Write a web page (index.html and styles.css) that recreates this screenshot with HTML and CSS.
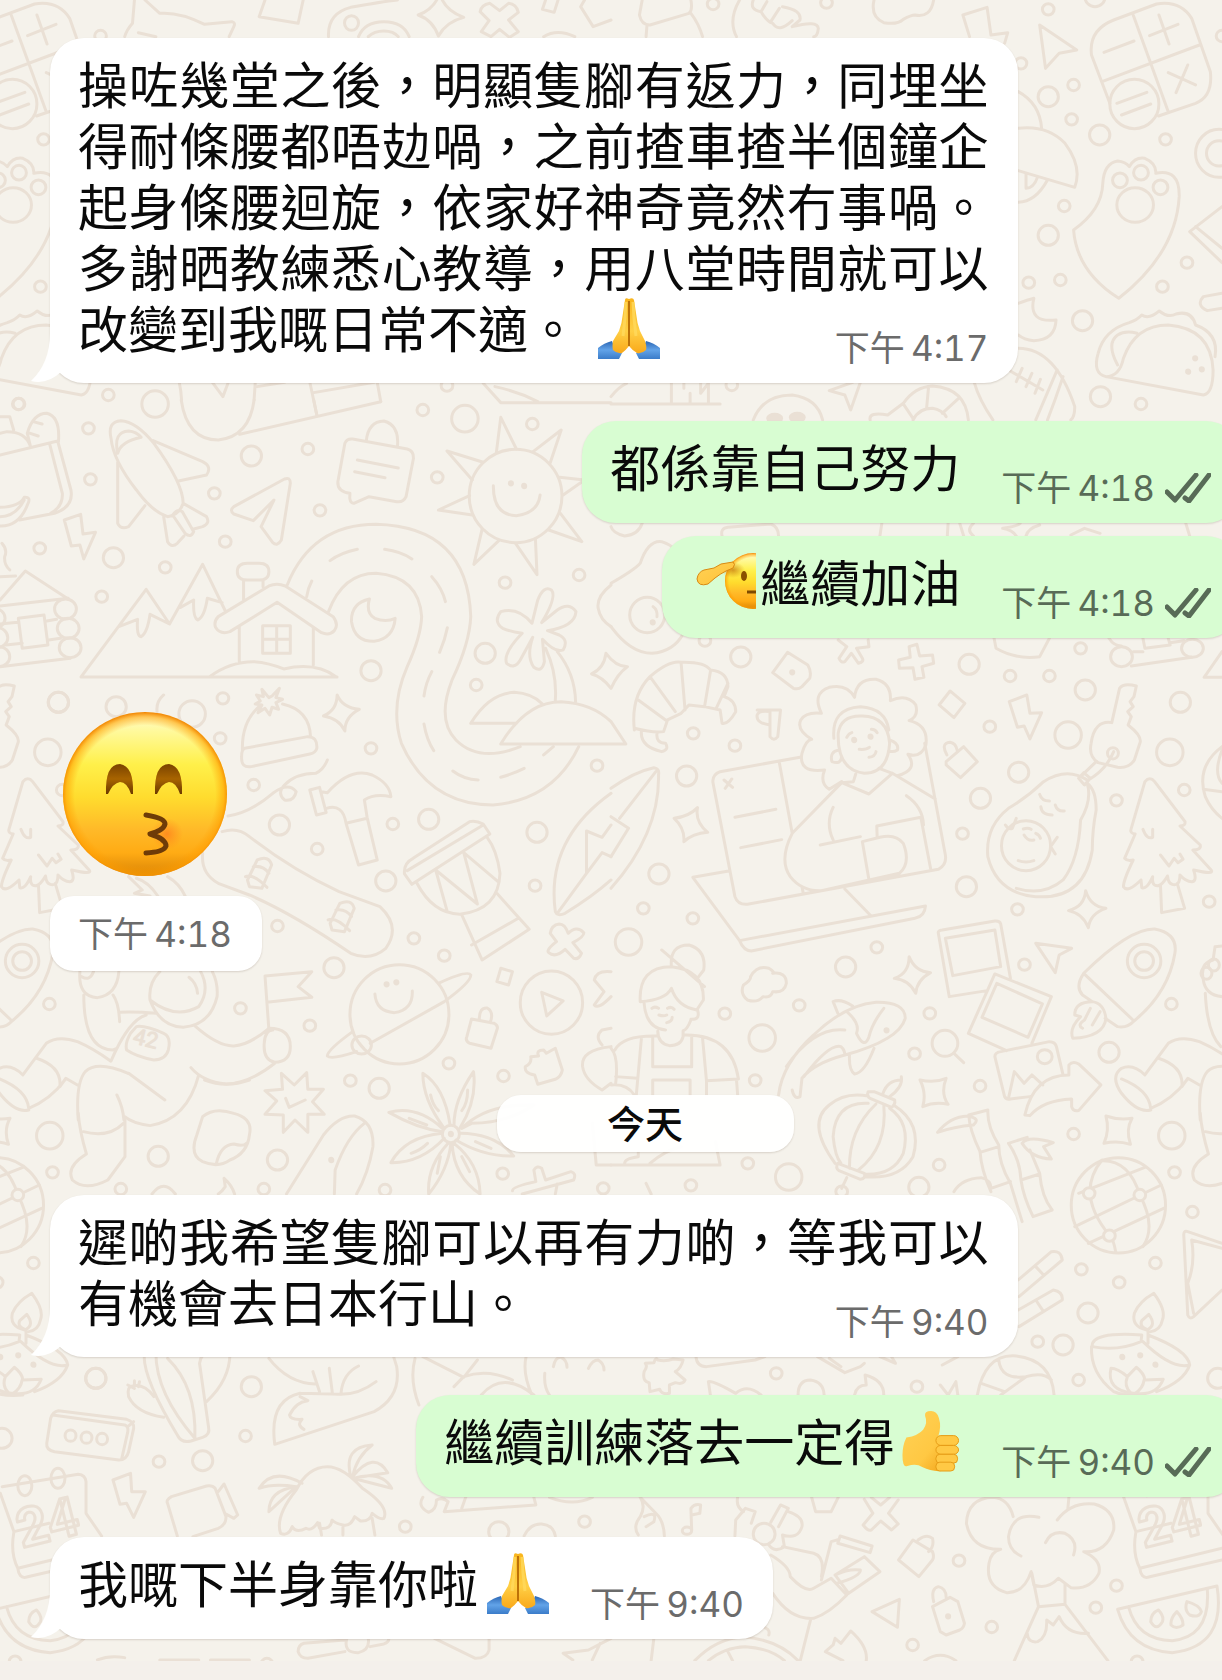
FILE: index.html
```html
<!DOCTYPE html>
<html lang="zh-HK">
<head>
<meta charset="utf-8">
<meta name="viewport" content="width=device-width, initial-scale=1">
<title>對話</title>
<link rel="stylesheet" href="styles.css">
</head>
<body>
<svg class="sprite" aria-hidden="true">
  <defs>
    <linearGradient id="skin" x1="0" y1="0" x2="0" y2="1"><stop offset="0" stop-color="#f9b51c"/><stop offset=".6" stop-color="#ffcf45"/><stop offset="1" stop-color="#f9a91a"/></linearGradient>
    <linearGradient id="sleeve" x1="0" y1="0" x2="0" y2="1"><stop offset="0" stop-color="#2b66b4"/><stop offset=".5" stop-color="#62a3e8"/><stop offset="1" stop-color="#3b7cc9"/></linearGradient>
    <linearGradient id="thumb" x1="0" y1="0" x2="1" y2="1"><stop offset="0" stop-color="#ffd257"/><stop offset=".6" stop-color="#ffc843"/><stop offset="1" stop-color="#ef9d12"/></linearGradient>
    <linearGradient id="face" x1="0" y1="0" x2="0" y2="1"><stop offset="0" stop-color="#fffbd0"/><stop offset=".12" stop-color="#fff99a"/><stop offset=".32" stop-color="#fff04a"/><stop offset=".52" stop-color="#ffdc2e"/><stop offset=".72" stop-color="#ffb928"/><stop offset=".86" stop-color="#ffab14"/><stop offset="1" stop-color="#d98305"/></linearGradient>
    <radialGradient id="rim" cx=".5" cy=".51" r=".51"><stop offset=".84" stop-color="#ff9d00" stop-opacity="0"/><stop offset=".94" stop-color="#ff9d00" stop-opacity=".55"/><stop offset="1" stop-color="#f08200"/></radialGradient>
    <radialGradient id="shade"><stop offset="0" stop-color="#b85a00" stop-opacity=".6"/><stop offset="1" stop-color="#c87000" stop-opacity="0"/></radialGradient>
    <radialGradient id="blush"><stop offset="0" stop-color="#ff7a1c" stop-opacity=".7"/><stop offset="1" stop-color="#ff8a1c" stop-opacity="0"/></radialGradient>
    <linearGradient id="eye" x1="0" y1="0" x2="0" y2="1"><stop offset="0" stop-color="#7a4300"/><stop offset=".5" stop-color="#a86400"/><stop offset="1" stop-color="#6b3900"/></linearGradient>
    <symbol id="pray" viewBox="0 0 62 61">
      <path d="M0 50Q6 45 14 43L17 51L24 55L21 61H0Z" fill="url(#sleeve)"/>
      <path d="M62 50Q56 45 48 43L45 51L38 55L41 61H62Z" fill="url(#sleeve)"/>
      <path d="M31 1Q27-1 27 2L25 15Q24 25 21 33L15 43Q14 49 15 52Q19 56 24 55Q28 52 31 48Z" fill="url(#skin)"/>
      <path d="M31 1Q35-1 36 2L38 15Q39 25 42 33L47 43Q49 49 48 52Q44 56 39 55Q34 52 31 48Z" fill="url(#skin)"/>
      <path d="M31 3V48" stroke="#bd7208" stroke-width="2" fill="none"/>
      <path d="M28 4L27 20L25 38M35 4L36 20L38 38" stroke="#ffd95c" stroke-width="3" fill="none" opacity=".8"/>
    </symbol>
    <symbol id="salute" viewBox="0 0 66 61">
      <circle cx="63" cy="29" r="28" fill="url(#face)"/>
      <circle cx="63" cy="29" r="28" fill="url(#rim)"/>
      <ellipse cx="43" cy="18" rx="12" ry="8" fill="url(#shade)"/>
      <ellipse cx="54" cy="24" rx="3" ry="5" fill="#8a5200"/>
      <path d="M57 40H66" stroke="#7e4a00" stroke-width="3"/>
      <path d="M7 27Q8 20 14 18L24 16L31 12L43 10Q46 12 43 16L36 19Q30 22 25 26L18 32Q8 35 7 27Z" fill="url(#thumb)" stroke="#d98a12"/>
    </symbol>
    <symbol id="thumbs" viewBox="0 0 58 62">
      <path d="M29 0Q22 0 23 5Q26 12 21 19Q16 25 4 27Q0 35 0 45Q0 58 5 56Q14 53 20 57Q30 62 40 61Q46 58 48 48L51 26L36 27Q40 16 37 7Q35 0 29 0Z" fill="url(#thumb)"/>
      <g fill="#ffc945" stroke="#e59c16"><rect x="34" y="25" width="23" height="10" rx="5"/><rect x="34" y="35" width="23" height="9" rx="5"/><rect x="34" y="44" width="22" height="9" rx="4"/><rect x="34" y="52" width="19" height="9" rx="4"/></g>
    </symbol>
    <symbol id="ticks" viewBox="0 0 46 30">
      <path d="M2 19L10 27L31 2M20 25L24 28L44 2" fill="none" stroke="currentColor" stroke-width="5" stroke-linecap="round" stroke-linejoin="round"/>
    </symbol>
    <symbol id="tail" viewBox="0 0 50 50">
      <path d="M19 0Q19 30 0 48Q16 52 30 39Q38 47 50 48V0Z" fill="#fff"/>
    </symbol>
  </defs>
</svg>

<main class="chat">
  <svg class="doodles" aria-hidden="true">
    <defs>
      <ellipse id="s" rx="15" ry="17"/><ellipse id="m" rx="26" ry="30"/><ellipse id="l" rx="34" ry="40"/><ellipse id="d" rx="4" ry="5" class="dot"/>
    </defs>
    <!-- motifs that repeat at both sides of the wallpaper -->
    <g id="edge">
      <g transform="translate(611 0) scale(.3897 .3333)">
        <path d="M1280 310L1233 165Q1225 90 1290 60L1400 12Q1460 0 1490 55L1538 215Q1545 290 1500 310L1405 348M1340 45L1430 335M1260 245L1510 135M1265 157L1342 123M1382 107L1455 73M1406 45L1432 132M1430 218L1500 255M1480 195L1450 278M1298 310L1375 277M1310 345L1385 312"/>
        <ellipse cx="1343" cy="312" rx="63" ry="74"/>
        <path d="M1187 690Q1260 630 1262 550Q1265 490 1300 483Q1320 485 1330 500Q1345 470 1370 475Q1400 490 1398 520Q1460 505 1458 590Q1450 760 1303 895Q1195 815 1187 690Z"/>
        <ellipse cx="1306" cy="541" rx="19" ry="22"/><ellipse cx="1360" cy="518" rx="19" ry="22"/><ellipse cx="1410" cy="562" rx="19" ry="22"/><ellipse cx="1345" cy="615" rx="47" ry="52"/>
        <path d="M1270 1130Q1305 1130 1315 1075Q1345 975 1430 975Q1540 985 1545 1110Q1545 1180 1520 1185ZM1270 1130Q1235 1120 1250 1060Q1265 990 1330 968Q1350 960 1362 945Q1380 960 1407 933Q1430 955 1450 942Q1490 930 1500 975Q1560 1000 1550 1070M1300 1095Q1270 1030 1300 1005Q1320 990 1350 1000"/>
        <use href="#d" x="1499" y="1075"/><use href="#d" x="1516" y="1108"/><use href="#d" x="1481" y="1115"/>
        <use href="#s" x="1423" y="418"/><use href="#s" x="1415" y="860"/><use href="#s" x="1360" y="1212"/>
      </g>
      <g transform="translate(611 400) scale(.3897 .3333)">
        <path d="M1305 865Q1315 848 1348 858L1342 890L1332 905L1340 920L1326 935L1335 950L1327 975Q1365 1010 1357 1030L1343 1080Q1330 1105 1300 1102L1250 1088Q1225 1070 1232 1030Q1240 960 1285 968Z"/>
        <use href="#m" x="1461" y="907"/><use href="#l" x="1434" y="1057"/>
      </g>
      <g transform="translate(611 700) scale(.3897 .3333)">
        <path d="M1370 245Q1383 228 1395 245L1473 365Q1475 378 1460 378L1512 435Q1515 450 1493 450L1540 510Q1550 525 1495 510Q1505 545 1490 545Q1475 545 1460 525Q1460 560 1440 553Q1430 550 1428 528Q1410 565 1395 555Q1388 550 1390 530Q1375 570 1362 563L1360 540Q1325 580 1315 560Q1315 540 1340 480Q1325 485 1318 475L1345 402Q1330 400 1335 385ZM1410 555L1413 638L1472 625L1453 550M1365 388Q1375 420 1390 412V388M1410 465L1432 498L1445 475L1455 488L1468 478L1460 462"/>
        <path d="M1213 820Q1330 685 1395 687Q1455 700 1447 760Q1430 880 1342 963Q1325 985 1300 980L1268 955M1213 820Q1190 860 1210 885L1235 905M1213 820L1342 963M1235 905Q1190 905 1190 945L1205 950Q1175 985 1185 1015Q1265 1010 1270 955Q1265 910 1235 905M1230 925L1215 960Q1195 975 1210 985M1255 935L1235 975"/>
        <ellipse cx="1368" cy="783" rx="43" ry="50"/><ellipse cx="1368" cy="783" rx="24" ry="28"/>
        <use href="#s" x="1438" y="912"/><use href="#s" x="1471" y="270"/>
        <path d="M1370 1125L1430 1030Q1460 1005 1510 1025Q1550 1045 1595 1083M1405 1075Q1470 1100 1465 1160L1480 1135L1510 1155M1370 1125Q1340 1090 1310 1105Q1280 1130 1310 1180Q1350 1240 1385 1230M1310 1137Q1380 1170 1385 1225Q1440 1200 1478 1140M1640 1120Q1560 1080 1530 1115Q1505 1150 1512 1260"/>
      </g>
      <g transform="translate(611 1080) scale(.3897 .3333)">
        <ellipse cx="1302" cy="376" rx="121" ry="143"/>
        <path d="M1200 340L1370 262M1190 440L1412 315M1225 490L1418 385M1260 240Q1190 340 1280 467Q1290 480 1295 515M1260 242Q1330 240 1357 345Q1400 440 1365 500M1512 100Q1515 150 1533 222Q1480 260 1497 300Q1530 335 1588 300L1632 230V120M1525 155Q1590 175 1628 130"/>
        <g class="solid"><use href="#s" x="1227" y="340"/><use href="#s" x="1357" y="345"/><use href="#s" x="1279" y="467"/></g>
        <use href="#s" x="1446" y="277"/><use href="#s" x="1397" y="549"/><use href="#s" x="1304" y="607"/><use href="#l" x="1439" y="167"/>
        <path d="M1270 108Q1305 122 1337 115Q1320 150 1333 193Q1300 180 1265 190Q1280 150 1270 108Z"/>
        <path d="M1375 750Q1335 740 1343 700Q1355 665 1393 640Q1425 690 1415 720Q1410 750 1385 755M1375 748Q1355 740 1362 722L1380 703Q1400 735 1378 748V790M1362 765Q1230 755 1235 800Q1300 815 1360 785L1362 765M1378 765Q1480 810 1485 855Q1440 870 1365 785M1233 800Q1230 880 1290 935Q1320 950 1370 945M1485 855Q1470 905 1400 935M1283 865Q1300 865 1325 890L1348 862Q1368 880 1370 900L1417 898Q1400 950 1340 940Q1270 930 1283 865ZM1325 890Q1315 920 1335 940M1368 900Q1365 925 1345 940"/>
        <use href="#d" x="1312" y="831"/><use href="#d" x="1358" y="826"/><use href="#d" x="1397" y="854"/>
        <use href="#m" x="1557" y="895"/>
      </g>
      <g transform="translate(611 1360) scale(.3897 .3333)">
        <path d="M1300 748L1555 678Q1580 860 1440 878Q1330 870 1300 748ZM1328 740Q1350 840 1440 842Q1540 830 1530 685M1405 750Q1385 760 1385 785Q1400 815 1415 785Q1420 770 1405 750ZM1452 755Q1435 775 1437 795Q1450 810 1468 795Q1468 775 1452 755ZM1478 725Q1470 750 1485 765Q1510 775 1515 755Q1510 735 1478 725Z"/>
        <path d="M1317 380L1512 343Q1530 345 1532 365V460L1572 528M1312 400L1347 515Q1337 580 1357 625L1568 565M1357 625Q1360 655 1377 652L1568 600M1347 515L1437 490"/>
        <ellipse cx="1375" cy="377" rx="18" ry="30"/><ellipse cx="1460" cy="355" rx="18" ry="30"/>
        <use href="#s" x="1350" y="905"/>
      </g>
      <text class="numeral" transform="translate(1144 1548) rotate(-14)">24</text>
    </g>
    <use href="#edge" x="-1122"/>

    <g transform="scale(.3897 .3333)">
      <path d="M345 0L340 70Q325 90 320 110M372 0L410 40Q460 35 525 73L595 65Q605 68 600 80L588 110M355 98L400 110M680 0L665 50L765 70L778 0M843 110Q840 40 900 22Q980 5 1020 0M920 110Q935 65 985 65Q1035 65 1050 110M945 110Q960 93 985 93Q1010 93 1022 110M1125 -10Q1110 30 1073 45Q1110 60 1125 108Q1145 65 1190 52Q1150 35 1135 0"/>
      <path d="M1310 110L1330 95L1305 60L1330 37Q1325 12 1305 10L1282 32L1257 10Q1235 15 1232 35L1255 62L1235 95L1260 110L1282 88L1305 110M1400 0L1392 28L1422 37L1432 0M1500 0L1490 20L1522 80L1568 60M1395 110Q1430 85 1475 110"/>
      <ellipse cx="902" cy="69" rx="18" ry="22"/><use href="#s" x="258" y="108"/>
      <path d="M545 1147L572 1190L585 1150M660 1160L730 1147M805 1178L960 1147M968 1147L977 1205M795 1147L813 1245M460 1147Q465 1175 466 1200M652 1200L655 1147M1240 1150L1285 1208H1568M1270 1160Q1330 1175 1380 1205"/>
      <use href="#s" x="1147" y="1157"/><use href="#s" x="278" y="1185"/>
    </g>
    <g transform="translate(611 0) scale(.3897 .3333)">
      <path d="M80 0L73 45Q78 75 100 75L200 40Q210 30 205 0M205 40Q225 70 235 110M92 80L90 110M330 0Q300 60 322 110M365 0Q355 30 385 35Q400 65 415 70Q430 100 465 62M385 35L400 5M410 65L432 25M440 20Q490 30 485 60Q470 75 465 80Q530 60 532 85Q530 110 520 110M675 0Q665 50 700 68Q735 75 750 58Q770 45 780 45Q820 55 828 0M903 45L965 22L975 105L1018 98L1010 130M903 45L920 110M1100 75L1195 150L1150 160L1115 205Z"/>
      <path d="M1045 275Q1100 310 1105 385M1045 385Q1120 375 1165 430Q1210 500 1190 562L1045 512M1120 540Q1090 605 1045 607M1095 530Q1085 565 1065 565V520M1568 620L1485 695L1568 788M1500 680L1568 745M1568 880L1520 890Q1500 915 1530 932L1568 925M1045 910Q1070 900 1085 895Q1070 970 1142 960Q1140 1020 1085 1022Q1060 1020 1045 1005"/>
      <ellipse cx="1560" cy="460" rx="60" ry="72"/><ellipse cx="1560" cy="460" rx="32" ry="38"/>
      <path d="M1045 1045Q1140 1045 1190 1220Q1190 1250 1180 1260M932 1147Q945 1200 980 1260M1020 1110L1108 1170M1055 1105L1040 1145M1080 1120L1065 1160M1102 1138L1088 1180M1160 1130Q1140 1200 1120 1260M1145 1110L1090 1260M0 1212H280M0 1190Q20 1160 40 1150M155 1147V1208M187 1147V1165M203 1180V1208M230 1147V1180L250 1150V1208M640 1147L615 1230L600 1185L560 1172L620 1147M365 1260Q390 1185 465 1185Q530 1195 543 1260M665 1260Q660 1235 710 1245L750 1210Q780 1160 825 1158Q910 1165 917 1260M775 1260Q790 1225 825 1225Q850 1230 860 1250M750 1212L775 1255M815 1160L810 1222M892 1195L850 1240"/>
      <ellipse class="dot" cx="420" cy="1255" rx="18" ry="12"/><ellipse class="dot" cx="478" cy="1252" rx="18" ry="12"/>
      <use href="#s" x="262" y="12"/><use href="#s" x="553" y="8"/><use href="#m" x="1122" y="290"/><use href="#s" x="1187" y="255"/><use href="#s" x="1122" y="28"/><use href="#m" x="1242" y="-10"/><use href="#s" x="1052" y="190"/><use href="#s" x="1182" y="358"/><use href="#m" x="1254" y="405"/><use href="#s" x="1163" y="618"/><use href="#m" x="1122" y="706"/><use href="#s" x="1478" y="788"/><use href="#s" x="1153" y="840"/><use href="#s" x="1072" y="848"/><use href="#m" x="1210" y="962"/><use href="#s" x="1568" y="108"/><use href="#m" x="1256" y="1190"/><use href="#s" x="310" y="1155"/>
    </g>
    <g transform="translate(0 400) scale(.3897 .3333)">
      <path d="M0 165L148 123L182 270Q190 320 140 340L50 360M128 135L160 280Q162 320 130 340M70 100Q85 40 120 40Q155 50 150 125M70 100L78 138M85 65L108 72M72 98L98 108M0 50L25 50L35 90M0 100L18 95Q65 95 78 138M0 322Q50 320 62 292Q80 290 72 310Q50 380 0 378M0 350Q40 350 62 300"/>
      <path d="M285 115Q275 65 310 62Q350 65 395 130Q470 250 470 310Q460 345 430 350Q390 335 350 270Q290 180 285 115ZM302 160Q290 95 330 93Q350 95 362 112Q310 125 302 160ZM393 122L520 185Q545 200 530 225L458 243M302 185V370Q310 390 330 380L372 317M420 350L430 425Q440 445 455 430L472 408M470 310L530 350Q540 370 520 380L495 388M443 345L475 400Q490 415 497 395L468 335Q455 325 443 345"/>
      <path d="M600 320L730 237Q745 230 745 250L722 420Q712 440 700 428L670 380L703 300L650 362L600 342Q588 332 600 320ZM465 0Q480 120 560 120Q640 110 652 0M615 103L977 5M805 0L813 45M165 360L207 343L213 402L245 397L215 477L205 435L183 438Z"/>
      <path d="M885 130Q890 115 905 117L1045 147Q1062 152 1061 175L1042 290Q1035 308 1018 305L947 290L908 310Q895 310 898 280Q865 275 867 245ZM940 122Q945 65 985 63Q1025 75 1020 140M917 180L1022 204M910 215L988 233"/>
      <ellipse cx="1323" cy="288" rx="119" ry="140"/>
      <path d="M1274 155L1285 52L1325 147M1368 155L1440 90L1412 188M1436 232L1500 240L1445 285M1438 340L1493 425L1408 390M1374 418L1378 524L1323 430M1280 422L1216 493L1237 388M1212 345L1125 330L1205 287M1212 240L1147 153L1238 186M1266 257Q1265 345 1325 347Q1380 340 1386 285"/>
      <use href="#d" x="1311" y="250"/><use href="#d" x="1345" y="258"/>
      <path d="M208 831H865M208 831L375 568L435 672L520 493L577 630M305 680L353 658Q350 710 362 710Q378 700 385 643L435 672M463 622L497 600Q495 655 508 660Q525 650 532 595L570 608M560 650L690 558Q710 548 732 558L855 650Q870 675 858 692Q845 708 825 698L711 607L590 695Q565 705 553 682Q548 665 560 650ZM614 680V785M804 683V795M674 677H745V760H674ZM710 677V760M674 718H745M625 600V540M675 560V540M635 490H665Q690 490 690 515Q690 540 665 540H635Q609 540 609 515Q609 490 635 490ZM538 830Q590 785 650 785Q690 788 728 807Q810 785 862 830"/>
      <path d="M948 597Q900 610 902 665Q910 725 960 724Q1010 715 1014 655Q990 668 962 655Q938 640 948 597ZM737 555Q800 373 965 373Q1200 380 1208 650Q1205 730 1160 840Q1120 960 1170 1020Q1230 1090 1335 1040M843 635Q880 520 965 520Q1075 530 1082 650Q1080 710 1045 800Q1000 920 1030 1030Q1100 1215 1265 1215Q1420 1200 1485 1040M787 590Q790 565 800 543M847 482Q875 458 917 448M987 448Q1030 455 1057 477M1108 530Q1135 565 1143 605M1148 683Q1142 720 1128 757M1108 815Q1092 850 1088 888M1088 972Q1095 1020 1113 1052M1162 1113Q1190 1138 1227 1140M1285 1132Q1320 1120 1345 1105M1395 1065L1420 1040"/>
      <path d="M1365 670Q1330 620 1285 635Q1265 665 1290 685Q1310 695 1340 700Q1290 760 1300 790Q1320 810 1335 780L1367 712Q1350 770 1370 802Q1390 820 1397 785L1392 718Q1425 760 1445 750Q1460 720 1435 705L1405 692Q1475 680 1478 635Q1460 605 1430 630L1390 668Q1430 590 1415 570Q1395 555 1380 600ZM1400 745Q1430 820 1425 900M1430 755Q1475 820 1477 905M1208 970H1325M1208 970Q1255 880 1320 877Q1365 880 1392 912M1285 1032Q1350 905 1440 905Q1520 910 1568 965L1606 1032H1285"/>
      <path d="M622 1050Q620 960 670 915M725 912Q795 930 797 1012M628 1045L790 1010Q815 1010 813 1045Q810 1058 795 1062L645 1100Q618 1105 620 1070Q620 1048 628 1045M690 893L672 868L676 890L658 885L668 903L655 912L672 915L662 938L680 925L692 945L698 922L715 928L708 908L725 898L708 893L717 865L698 888ZM865 885Q880 925 922 928Q885 950 885 993Q870 955 830 948Q865 930 865 885ZM403 935Q400 905 420 885M585 1248Q640 1240 700 1180Q740 1145 760 1175Q755 1205 730 1200Q710 1180 730 1155Q760 1120 810 1120Q830 1110 840 1080"/>
      <path d="M0 600L65 513L175 597M0 618L175 595M0 530L40 528M5 430Q20 450 12 470Q10 495 25 510M47 655L113 645L123 735L57 745ZM120 663L145 658M0 672L45 667M125 720L155 715M15 735L57 730M0 800L180 775M1555 760Q1550 805 1518 822Q1545 830 1568 865Q1585 820 1610 800Q1580 800 1555 760M1568 555Q1530 590 1535 625Q1540 660 1568 680"/>
      <ellipse cx="168" cy="627" rx="28" ry="30"/><ellipse cx="175" cy="685" rx="28" ry="30"/><ellipse cx="180" cy="743" rx="28" ry="30"/><ellipse cx="-15" cy="655" rx="28" ry="30"/><ellipse cx="-8" cy="713" rx="28" ry="30"/><ellipse cx="-3" cy="770" rx="28" ry="30"/>
      <use href="#s" x="47" y="12"/><use href="#s" x="227" y="85"/><use href="#s" x="232" y="238"/><use href="#s" x="102" y="445"/><use href="#s" x="424" y="502"/><use href="#s" x="261" y="590"/><use href="#s" x="578" y="425"/><use href="#s" x="550" y="280"/><use href="#s" x="790" y="147"/><use href="#s" x="821" y="331"/><use href="#s" x="1085" y="30"/><use href="#s" x="1122" y="232"/><use href="#s" x="1366" y="72"/><use href="#s" x="1486" y="525"/><use href="#s" x="1296" y="548"/><use href="#s" x="1222" y="855"/><use href="#s" x="572" y="895"/><use href="#s" x="952" y="1045"/><use href="#s" x="565" y="1015"/><use href="#s" x="651" y="1155"/><use href="#s" x="1532" y="1097"/>
      <use href="#m" x="645" y="168"/><use href="#m" x="291" y="473"/><use href="#m" x="298" y="920"/><use href="#m" x="150" y="907"/><use href="#m" x="952" y="812"/><use href="#m" x="1245" y="760"/><use href="#l" x="398" y="12"/><use href="#l" x="1193" y="56"/><use href="#l" x="493" y="942"/>
    </g>
    <g transform="translate(611 400) scale(.3897 .3333)">
      <path d="M75 490Q95 420 130 425Q155 435 165 450M75 490Q60 510 0 550M0 680Q50 760 105 760Q160 755 185 702M108 620Q120 630 118 650"/>
      <ellipse cx="93" cy="645" rx="45" ry="53"/><use href="#d" x="107" y="667"/>
      <path d="M60 990Q50 890 100 830Q150 780 180 787Q240 785 255 810Q300 815 300 860L290 890Q320 900 320 935Q300 975 285 970L280 930L240 920L200 915L180 940L145 960L135 995Q110 1000 60 985M100 830L165 935M180 790L190 930M255 815L240 920M70 900L140 960M300 850L270 925M78 995Q75 1040 130 1055Q150 1050 140 1030Q115 1030 118 1000M375 930H435L428 1010Q418 1025 408 1010V935M408 975Q372 970 375 945Q380 930 408 935M453 757L505 795Q515 815 510 835L490 860Q480 870 468 865L415 818Z"/>
      <use href="#d" x="465" y="817"/>
      <path d="M583 720L605 740L585 775Q590 790 600 785L617 760L635 790Q650 785 645 775L630 745L662 740L660 720M765 740L785 733L792 768L825 765L828 790L798 800L803 832L780 838L775 803L740 805L738 780L768 772ZM983 715L988 745Q1040 780 1100 770L1125 715M1335 798L1490 772M1340 755H1365M1365 715L1370 745L1435 735L1430 715M1435 728L1470 722M1278 715Q1290 738 1310 738M1568 755L1522 832H1568M870 873L908 910L880 953L842 915ZM1022 905L1067 885L1075 940L1105 938L1075 1017L1060 978L1043 982Z"/>
      <ellipse cx="1310" cy="770" rx="28" ry="30"/><ellipse cx="1492" cy="745" rx="28" ry="27"/>
      <path d="M592 1145L560 1168Q535 1150 548 1110Q480 1120 490 1060Q500 1020 515 1018Q475 990 487 960Q500 935 540 940Q515 880 560 862Q605 850 625 892Q630 835 680 838Q720 850 717 902Q760 880 782 915Q790 950 765 962Q815 975 808 1035Q795 1075 762 1063Q790 1110 735 1127M583 1000Q590 945 645 948Q710 950 715 1030Q710 1120 650 1120Q580 1110 583 1000ZM572 1015Q565 925 640 920Q705 925 713 990M585 1050Q560 1055 567 1085Q590 1095 592 1070M715 1020Q740 1030 735 1050Q725 1058 712 1053M605 1012Q610 1000 618 998M668 988Q678 988 683 998M637 1048Q655 1050 663 1042M662 1072Q678 1070 680 1055"/>
      <use href="#d" x="624" y="1020"/><use href="#d" x="666" y="1010"/>
      <ellipse cx="1288" cy="1060" rx="14" ry="17"/><path d="M1290 1055Q1270 1110 1225 1140M1245 1085L1205 1130M1213 1118L1230 1135L1215 1155L1200 1135Z"/>
      <path d="M285 408Q280 385 300 382L410 372Q430 380 430 408M695 370L690 408M865 370L863 408M895 370L905 408M930 370Q910 390 930 408M1005 385Q1040 380 1050 370M1100 375Q1070 385 1065 408M1005 385Q1030 390 1040 408M1180 405L1215 385L1255 400M1475 370L1485 408M80 370Q70 405 35 408Q5 400 0 380"/>
      <use href="#s" x="241" y="722"/><use href="#s" x="1205" y="745"/><use href="#s" x="1024" y="828"/><use href="#s" x="1125" y="828"/><use href="#m" x="333" y="771"/><use href="#m" x="919" y="793"/><use href="#m" x="1217" y="870"/>
    </g>
    <g transform="translate(0 700) scale(.3897 .3333)">
      <path d="M795 270L820 262L837 338L812 345ZM825 275L840 278Q900 200 955 225Q1000 250 1003 290Q960 280 935 300L942 352L968 480L920 495L888 370L942 355M888 370Q880 310 838 325M520 460Q515 520 560 550L640 585Q750 640 900 760Q950 785 990 745Q1030 680 975 620L870 575Q750 510 640 410Q610 380 570 395M635 540L660 480Q690 465 697 495L672 565L640 560ZM630 530Q650 520 685 562M650 500Q675 495 690 520M847 670L872 610Q902 595 909 625L884 695L852 690ZM842 660Q862 650 897 692M862 630Q887 625 902 650M330 530L365 570L345 580L385 588M350 535Q380 545 405 588M430 530Q460 550 475 588"/>
      <path d="M1038 522Q1035 490 1060 475L1205 365Q1220 360 1240 372L1257 402L1057 553ZM1045 512L1240 375M1070 550Q1110 640 1180 643Q1280 630 1283 520Q1275 450 1250 412M1118 510L1147 632M1118 510L1225 612L1190 458L1278 545M1185 645L1237 780L1358 688L1275 580M1210 735L1330 655M1568 280Q1400 420 1425 635Q1430 650 1450 640Q1520 590 1568 540M1568 375L1545 412L1505 393V520L1430 640M1505 520L1545 458L1568 470M1435 672Q1450 672 1458 700Q1480 675 1498 698Q1500 710 1470 728L1492 760Q1485 780 1472 775L1450 748Q1425 775 1408 758Q1400 750 1428 725L1412 700Q1415 675 1435 672Z"/>
      <ellipse cx="1025" cy="943" rx="127" ry="149"/><ellipse cx="1415" cy="908" rx="80" ry="95"/><ellipse cx="928" cy="1035" rx="25" ry="27"/>
      <use href="#d" x="992" y="853"/><use href="#d" x="1017" y="847"/>
      <path d="M962 882Q965 935 1012 938Q1060 930 1058 873M1125 850Q1200 810 1208 825Q1210 845 1140 905L950 1030M905 995Q840 1050 840 1068Q850 1080 915 1055M1285 805L1315 815L1305 855L1275 845ZM1390 877L1445 903L1403 948ZM690 990L680 828L800 815L765 860L800 892L685 907M1210 957L1268 970Q1280 978 1275 990L1260 1045L1205 1030Q1193 1022 1198 1010ZM1230 958Q1230 922 1250 924Q1268 935 1258 968M1362 1070L1382 1068Q1375 1050 1395 1050L1402 1060L1425 1045L1443 1110Q1440 1130 1425 1138L1380 1153L1372 1125Q1345 1120 1348 1100Q1365 1090 1362 1070ZM1568 815Q1530 810 1525 840L1550 875L1525 915Q1535 930 1568 890M1568 1040Q1490 1050 1495 1100Q1500 1140 1545 1170L1568 1150M1545 1035Q1525 1010 1545 990L1568 985"/>
      <path d="M410 815Q380 850 385 900Q450 960 510 920Q540 870 515 815M385 900Q410 980 470 982Q540 975 557 890Q560 850 545 815M485 832Q505 850 507 880M205 815Q200 890 250 893Q300 885 305 815M210 830Q230 845 240 815M215 885Q215 1050 290 1050L300 1045M290 885Q305 910 307 965M307 937Q350 935 400 940M285 1083Q330 960 375 945M350 980Q370 975 420 1000Q440 1010 432 1050Q425 1080 395 1080Q350 1070 325 1050Q320 1030 335 1000ZM500 978Q560 1040 600 1038Q640 1035 690 985Q745 985 745 1040Q745 1085 705 1087Q675 1080 678 1030Q680 990 700 990M705 1090Q640 1150 580 1152Q520 1145 490 1103M510 1125Q480 1260 385 1277Q340 1270 320 1250M300 1185Q315 1220 318 1260M330 1120L423 1200"/>
      <use href="#s" x="814" y="447"/><use href="#s" x="1008" y="372"/><use href="#s" x="1373" y="557"/><use href="#s" x="712" y="678"/><use href="#s" x="1062" y="715"/><use href="#s" x="1140" y="767"/><use href="#s" x="617" y="925"/><use href="#s" x="795" y="977"/><use href="#s" x="1152" y="1090"/><use href="#s" x="1292" y="1128"/><use href="#s" x="899" y="1142"/>
      <use href="#m" x="717" y="375"/><use href="#m" x="1100" y="358"/><use href="#m" x="1378" y="397"/><use href="#m" x="990" y="543"/><use href="#m" x="857" y="803"/><use href="#m" x="973" y="1165"/>
    </g>
    <text class="badge-number" transform="translate(132 1043) rotate(14)">42</text>
    <g transform="translate(611 700) scale(.3897 .3333)">
      <path d="M0 265Q60 215 110 203Q125 205 122 225Q125 400 0 565M115 215L22 355M0 350L45 385L0 470M1568 140Q1500 200 1525 290Q1540 330 1568 355M1568 150Q1545 220 1568 250M1520 268L1568 275M222 323Q215 365 248 397Q210 400 187 425Q190 385 162 355Q200 350 222 323ZM1218 572Q1230 620 1270 625Q1230 640 1225 683Q1210 640 1174 632Q1215 620 1218 572ZM765 770Q780 815 820 818Q785 840 782 880Q765 840 727 835Q765 820 765 770ZM793 1140Q830 1150 860 1135Q845 1180 865 1213Q830 1205 800 1220Q810 1180 793 1140Z"/>
      <path d="M485 172L280 215Q258 225 262 250L318 590Q325 615 350 613L840 508Q862 495 858 465L805 130M432 188L465 400M290 240L312 262M310 237L293 265M318 352L423 328M333 443L438 419M302 513L210 532L330 722L807 618Q805 650 780 655L360 753Q340 752 330 722M600 567L665 645M490 560L493 578M628 222L622 245L592 248L465 400Q430 480 460 530Q490 575 540 572L740 520Q770 490 750 430Q730 400 690 412L645 425L662 540M592 248L662 282L722 220L688 205M722 220L832 297M758 287Q800 320 802 375M570 322Q550 370 570 420M537 435L640 410M683 412L682 378L795 352L820 505"/>
      <path d="M860 185L905 140L940 185L897 233L860 195ZM862 165Q845 130 870 127Q885 130 888 150M1222 240Q1170 200 1110 245Q1070 290 1020 325Q960 380 967 470Q990 580 1090 590Q1215 600 1235 450Q1235 390 1245 330Q1245 270 1222 250Q1235 300 1205 360Q1200 480 1160 540Q1110 590 1040 565M1100 283Q1105 303 1125 303M1103 320Q1105 345 1132 345M1140 315Q1145 335 1163 333M1058 387Q1070 382 1078 388M1060 405Q1070 425 1085 420M1090 400Q1100 405 1102 415M1045 482Q1065 490 1085 482M1012 375Q1020 390 1030 385L1040 355M1145 412L1128 440L1140 462"/>
      <ellipse cx="1065" cy="437" rx="63" ry="75"/><ellipse cx="1113" cy="1070" rx="19" ry="21"/><ellipse cx="857" cy="1030" rx="33" ry="39"/>
      <path d="M1025 835L1000 672Q998 662 985 663L850 690Q838 692 840 700L868 890L965 872M858 715L985 690L1000 800L877 827ZM1080 1030L1130 890L985 822L917 1000L1015 1052M990 850L1107 912L1070 1012L952 952ZM1160 1125L1143 1040Q1140 1025 1125 1025L1000 1055Q985 1058 985 1070L1010 1190Q1015 1200 1025 1197L1075 1190M1020 1195L1035 1115L1060 1150L1080 1125L1108 1155M1062 1245Q1085 1125 1175 1125V1095Q1185 1082 1200 1092L1257 1155L1200 1232Q1185 1235 1182 1220V1197Q1110 1200 1075 1247ZM1090 730L1182 745L1150 765L1140 818ZM880 1060L905 1088M340 855Q360 840 358 830Q375 795 405 805Q420 815 415 820Q450 815 450 850Q445 880 415 875Q410 895 390 890Q375 910 350 900Q330 880 340 855Z"/>
      <path d="M430 1185Q440 1090 520 1005Q600 915 680 907Q755 905 755 955Q740 1020 600 1065Q520 1090 490 1135L485 1190Q470 1200 465 1170M600 990Q520 980 450 1100M570 905Q590 895 620 918M570 905L582 940M495 1130Q560 1030 590 1040Q600 1050 600 1065M605 935Q640 970 630 1000Q650 1050 662 1010Q670 970 700 925M612 1065Q610 1110 625 1122Q650 1120 675 1045"/><use href="#d" x="707" y="991"/>
      <path d="M75 905Q70 800 155 800Q240 810 237 900L220 930Q170 920 155 865Q140 900 75 905M205 958Q230 960 222 930M85 910Q90 985 140 990M205 960Q195 990 185 992V1010Q180 1037 150 1037Q120 1030 120 993M155 800Q150 735 200 735Q245 750 238 810L225 830M130 750L240 860M105 925Q112 918 122 925M145 925Q155 918 162 928M123 945Q135 950 143 945M143 968Q157 965 157 952M120 1008Q30 1005 10 1050M185 1005Q310 1000 327 1137L245 1142L235 1015M107 1010V1100H207V1010M78 1015L65 1185M107 1185V1140H203V1185M245 1142V1185M322 1140L325 1185M12 1130L68 1135M0 1045Q20 1070 12 1150M0 1155Q40 1150 60 1185"/>
      <path d="M1525 880Q1530 1000 1565 1040M1520 840Q1510 790 1545 780L1550 740L1568 738M1520 840Q1525 885 1568 890"/><ellipse cx="1528" cy="820" rx="14" ry="18"/><ellipse cx="1547" cy="795" rx="14" ry="18"/>
      <use href="#s" x="211" y="100"/><use href="#s" x="318" y="137"/><use href="#s" x="972" y="80"/><use href="#s" x="902" y="401"/><use href="#s" x="1297" y="301"/><use href="#s" x="1043" y="628"/><use href="#s" x="1535" y="605"/><use href="#s" x="83" y="625"/><use href="#s" x="210" y="655"/><use href="#s" x="682" y="742"/><use href="#s" x="1061" y="794"/><use href="#s" x="483" y="916"/><use href="#s" x="292" y="941"/><use href="#s" x="818" y="940"/><use href="#s" x="370" y="1141"/><use href="#s" x="779" y="1061"/><use href="#s" x="947" y="1158"/>
      <use href="#m" x="194" y="228"/><use href="#m" x="1046" y="217"/><use href="#m" x="948" y="295"/><use href="#m" x="123" y="522"/><use href="#m" x="912" y="560"/><use href="#m" x="602" y="801"/><use href="#m" x="1278" y="1057"/><use href="#l" x="1173" y="105"/><use href="#l" x="45" y="726"/><use href="#l" x="388" y="1014"/>
    </g>
    <g transform="translate(0 1080) scale(.3897 .3333)">
      <path d="M722 -20L755 15L787 -22L790 28L830 28L802 65L832 103L790 103V157L757 120L727 157V105L680 103L710 63L680 32L725 28ZM733 55L742 82L783 60M520 110Q550 80 600 100Q650 115 640 165Q635 220 590 240Q560 265 520 245Q485 225 505 165ZM555 252Q565 195 600 192Q625 200 632 190M525 0Q580 25 640 0M575 295L578 320Q570 335 560 342M575 295Q595 315 602 342M735 342L830 165Q870 105 910 108Q960 125 957 200Q945 280 915 342M935 130Q890 170 860 270L858 342M390 342Q420 295 450 342"/>
      <ellipse cx="1157" cy="162" rx="22" ry="26"/><use href="#d" x="1157" y="162"/><use href="#d" x="850" y="240"/>
      <path d="M1140 145Q1085 60 1085 -20Q1140 20 1155 135M1165 135Q1165 60 1215 -25Q1225 60 1180 145M1135 155Q1070 145 998 97Q1070 75 1135 145M1180 160Q1270 160 1318 228Q1240 230 1170 180M1140 175Q1080 250 1003 248Q1040 170 1135 160M1150 190Q1095 260 1100 342Q1150 270 1157 190M1165 190Q1230 250 1232 342Q1165 290 1160 190M1185 145Q1250 70 1370 75Q1300 130 1210 130ZM1105 45Q1110 75 1125 92M1200 30Q1200 70 1185 92M1050 115L1095 135M1055 220Q1080 210 1097 190M1220 185L1260 205M1130 230L1122 280M1185 230L1205 275M1315 332Q1315 320 1375 305L1370 270Q1378 255 1390 265L1400 300L1465 275Q1480 280 1472 300L1340 342M1425 342L1430 312M1520 130L1530 255H1568"/>
      <use href="#s" x="310" y="327"/><use href="#s" x="677" y="327"/><use href="#s" x="988" y="330"/><use href="#s" x="1290" y="281"/><use href="#s" x="1548" y="325"/><use href="#m" x="406" y="229"/><use href="#m" x="712" y="240"/>
    </g>
    <g transform="translate(611 1080) scale(.3897 .3333)">
      <path d="M575 250Q500 130 560 75Q600 35 660 48M725 75Q800 130 775 230Q740 300 650 290M660 70Q575 65 570 170Q575 230 590 250M680 72Q610 150 612 265M700 75Q710 200 635 270M715 85Q770 130 750 220Q725 285 655 283M660 35Q655 50 665 55L720 82Q730 75 728 60L675 35ZM582 250Q575 265 585 272L640 298Q655 295 650 280ZM698 40Q710 0 745 0M715 50Q750 20 745 -10M605 293L592 325"/>
      <path d="M918 105L967 90Q965 140 995 195Q995 250 1025 310L1055 425M918 105Q920 150 947 215Q950 270 975 335M947 217L995 200M975 325L1025 305M1075 210L1100 280Q1105 350 1132 390L1083 410Q1058 350 1052 300Q1050 240 1020 190L1068 172M1052 300L1100 282M838 157Q870 110 915 108Q950 115 930 135Q880 140 838 157M1055 190Q1070 165 1135 188L1110 200L1130 237Q1080 235 1055 190M880 335Q900 295 950 293Q975 300 975 325M0 255H280L268 185M35 250Q35 235 70 230V215M100 250Q140 210 180 200M90 310L103 342"/>
      <path d="M1568 490L1480 455Q1468 450 1470 470L1480 705Q1485 720 1495 710L1568 630M1568 505L1490 480Q1500 550 1480 610L1495 700M1045 600L1130 515Q1155 510 1158 540L1047 650M1090 560L1110 585M1045 690L1135 630Q1160 635 1158 660L1047 740M1090 660L1110 695M218 830Q220 860 245 860L370 840L395 830M530 830L600 878L640 860L650 850M560 835L590 860M690 830L730 850L720 830M850 855L890 830"/>
      <use href="#s" x="592" y="335"/><use href="#s" x="842" y="255"/><use href="#s" x="351" y="250"/><use href="#s" x="205" y="316"/><use href="#s" x="1187" y="162"/><use href="#s" x="1492" y="396"/><use href="#s" x="1207" y="568"/><use href="#s" x="1095" y="785"/><use href="#s" x="424" y="880"/><use href="#s" x="1200" y="900"/><use href="#m" x="790" y="322"/><use href="#m" x="1160" y="795"/><use href="#m" x="1224" y="699"/><use href="#l" x="456" y="291"/>
    </g>
    <g transform="translate(0 1360) scale(.3897 .3333)">
      <path d="M150 152L325 178Q345 185 343 205L330 275Q325 300 305 300L140 275Q118 270 120 250L130 175Q135 155 150 152ZM135 165L320 195Q330 200 328 215L312 298M328 200L343 185M370 -10Q370 60 455 225Q465 250 490 243L520 232Q540 225 535 200L512 10Q515 -20 540 -30M400 -20Q400 100 500 235M430 -5Q505 80 500 235M420 172Q350 160 330 110Q325 80 340 78Q370 70 395 110M345 62V78M358 65L355 80M328 75L345 85M590 -20Q590 60 530 125"/>
      <ellipse cx="181" cy="227" rx="14" ry="17"/><ellipse cx="222" cy="233" rx="14" ry="17"/><ellipse cx="262" cy="237" rx="14" ry="17"/>
      <path d="M690 -5Q740 70 810 72M770 100Q800 100 870 103Q920 105 965 65M770 100Q690 120 705 253L960 155Q1030 110 1018 20L1010 -10M875 100Q880 40 920 18M845 25L853 100M803 35L820 95M770 110L790 122Q760 125 743 165Q745 180 775 178Q760 195 780 208M1065 -5Q1050 60 1075 135M1085 -10L1190 52L1225 0M1165 80L1190 50Q1250 25 1315 60M1235 105Q1290 30 1370 105M1350 -10Q1340 40 1365 105M1398 40Q1395 80 1410 105M1420 20Q1425 -10 1440 -8Q1455 0 1455 22M1510 25Q1520 0 1535 0Q1550 10 1550 30"/>
      <path d="M720 520Q705 470 760 390Q790 320 840 320Q880 320 930 385Q1000 440 985 475Q975 480 955 460Q950 485 925 483L910 470Q900 500 880 495Q860 490 852 480Q850 510 820 505L815 488Q800 515 785 505Q760 520 750 500Q740 530 720 520ZM775 370Q700 320 665 385Q700 370 760 380Q690 390 690 455L760 380M900 350Q880 260 955 255Q915 290 905 350Q960 270 995 338L905 355Q980 330 1005 385L905 355M820 490L825 525M880 500V525M955 475L962 525M290 360L335 340L338 395L373 395L343 472L325 430L308 433ZM455 528L430 430Q425 420 440 410L530 378Q545 375 552 385L580 470Q580 495 560 505L495 530M560 395L575 372L610 465L600 475L580 462"/>
      <path d="M885 840L780 850Q765 855 765 875Q770 895 790 895L885 875M890 835Q880 880 920 878Q950 870 945 835M950 860L985 852Q1000 845 997 835M1115 835L1220 895Q1250 895 1255 870V835M250 900Q280 885 320 893M410 900H510M540 900H640M1568 835L1510 870L1445 880L1470 900M1540 850L1520 900M1085 412Q1070 440 1100 457Q1120 450 1120 420Q1135 410 1150 425L1140 455L1375 435L1370 412M1195 412L1185 445M1410 412Q1470 440 1520 412M1345 528Q1360 490 1390 492Q1420 495 1425 528"/>
      <use href="#s" x="630" y="228"/><use href="#s" x="408" y="305"/><use href="#s" x="1040" y="500"/><use href="#s" x="1500" y="485"/><use href="#s" x="685" y="912"/><use href="#m" x="246" y="55"/><use href="#m" x="645" y="80"/><use href="#m" x="520" y="302"/><use href="#m" x="1280" y="515"/><use href="#m" x="5" y="235"/>
    </g>
    <g transform="translate(611 1360) scale(.3897 .3333)">
      <path d="M85 35Q95 20 88 10L110 8Q115 -10 120 0Q140 5 160 -3L185 0Q180 25 165 35L190 60Q185 75 165 68L150 75L150 100Q130 105 125 88L100 95L98 68Q80 65 85 35ZM255 105L250 65Q260 60 320 100Q350 70 385 105M480 105Q480 60 512 60Q545 65 547 105M625 105Q630 75 655 75L652 45Q700 60 700 105M845 75L865 105L885 65L890 105M940 105Q960 -20 1040 -12Q1130 0 1137 105M995 0Q1000 60 1065 50Q1110 35 1130 60M950 70L1010 95M1065 50L1000 105M75 412Q90 440 75 470Q55 500 70 525M75 412L115 460Q135 480 137 528M85 470Q120 450 110 485L90 500M207 510L205 445Q215 430 230 435L228 460L207 465"/>
      <ellipse cx="195" cy="512" rx="12" ry="11"/><ellipse cx="393" cy="522" rx="28" ry="32"/>
      <path d="M325 412Q320 440 340 455M410 487L435 435L455 445L430 500M455 455Q495 470 490 500Q480 540 440 525L445 560Q420 580 405 555M318 528L320 480L345 445L370 455L360 490M440 560L520 580Q550 590 540 650M410 585Q460 620 460 650Q500 700 520 685L565 655L605 705Q560 760 520 775Q460 780 415 700M540 660L565 545L585 538M588 528L670 558L665 578L582 550ZM575 645L650 590L690 635L610 700ZM580 670Q640 650 640 630Q610 625 575 645M512 780L485 905M515 412L525 455H565L583 412M650 418L672 460L647 495Q660 515 668 510L692 483L720 510L737 492L712 460L737 420M668 412L692 435L715 412"/>
      <path d="M1000 568Q925 570 912 490Q915 415 980 412Q1020 415 1032 470M1145 480Q1180 425 1240 432Q1295 450 1290 510Q1270 580 1213 575Q1260 600 1252 640Q1230 690 1180 683L1148 655Q1120 690 1085 675L1078 635Q1060 700 1015 698Q960 680 970 610Q975 575 1000 568M1098 472Q1030 455 1020 530Q1020 570 1052 588M1115 548Q1130 510 1165 520Q1200 540 1187 585M1175 412L1172 450M1080 640L1097 740L1165 733V670M1097 740L1035 902M1165 733L1275 902M1068 820Q1070 850 1095 845Q1120 830 1118 780L1135 795L1150 770Q1170 825 1225 820M738 600L775 540L825 575Q830 590 825 600L790 650ZM788 540Q810 520 825 535Q830 560 815 575M825 740L870 712L890 725L907 790Q905 805 895 810L860 825L845 815ZM828 725Q820 685 840 680Q860 685 860 712M670 755L740 718L735 802ZM595 902L550 875L570 855L575 835L590 850L615 813Q660 860 655 902M215 902Q270 835 340 830Q430 840 480 902M250 902Q290 862 345 860Q410 865 445 902M300 875L312 902M385 800Q410 805 405 825M110 835L103 902M805 902Q845 870 885 902"/>
      <use href="#d" x="865" y="769"/><use href="#s" x="785" y="80"/><use href="#s" x="893" y="602"/><use href="#s" x="1297" y="677"/><use href="#s" x="1244" y="743"/><use href="#s" x="977" y="801"/><use href="#s" x="774" y="855"/>
    </g>
  </svg>

  <div class="thread">
    <article class="bubble long received">
      <p class="text">操咗幾堂之後，明顯隻腳有返力，同埋坐得耐條腰都唔攰喎，之前揸車揸半個鐘企起身條腰迴旋，依家好神奇竟然冇事喎。多謝晒教練悉心教導，用八堂時間就可以改變到我嘅日常不適。 <svg class="emoji pray" role="img" aria-label="🙏"><use href="#pray"/></svg><span class="meta"><time>下午&#8201;4:17</time></span></p>
      <svg class="tail" aria-hidden="true"><use href="#tail"/></svg>
    </article>

    <article class="bubble sent reply">
      <p class="text">都係靠自己努力</p>
      <div class="meta"><time>下午&#8201;4:18</time><svg class="ticks" role="img" aria-label="已送達"><use href="#ticks"/></svg></div>
    </article>

    <article class="bubble sent follow">
      <p class="text"><svg class="emoji salute" role="img" aria-label="🫡"><use href="#salute"/></svg>繼續加油</p>
      <div class="meta"><time>下午&#8201;4:18</time><svg class="ticks" role="img" aria-label="已送達"><use href="#ticks"/></svg></div>
    </article>

    <article class="sticker">
      <svg class="kiss" viewBox="0 0 164 164" role="img" aria-label="😙">
        <circle cx="82" cy="82" r="82" fill="url(#face)"/>
        <circle cx="82" cy="82" r="82" fill="url(#rim)"/>
        <path d="M43 82Q42 52 57 52Q71 54 70 82L68 82Q64 70 57 70Q50 71 45 82Z" fill="url(#eye)"/>
        <path d="M92 82Q91 52 106 52Q120 54 119 82L117 82Q113 70 106 70Q99 71 94 82Z" fill="url(#eye)"/>
        <circle cx="104" cy="122" r="16" fill="url(#blush)"/>
        <path d="M83 103Q102 106 102 112Q101 118 87 122Q103 127 103 134Q101 140 83 141" fill="none" stroke="#6e3b08" stroke-width="5" stroke-linecap="round" stroke-linejoin="round"/>
      </svg>
      <div class="stamp"><time>下午&#8201;4:18</time></div>
    </article>

    <h2 class="day">今天</h2>

    <article class="bubble long received first">
      <p class="text">遲啲我希望隻腳可以再有力啲，等我可以有機會去日本行山。<span class="meta"><time>下午&#8201;9:40</time></span></p>
      <svg class="tail" aria-hidden="true"><use href="#tail"/></svg>
    </article>

    <article class="bubble sent reply">
      <p class="text">繼續訓練落去一定得<svg class="emoji thumbs" role="img" aria-label="👍"><use href="#thumbs"/></svg></p>
      <div class="meta"><time>下午&#8201;9:40</time><svg class="ticks" role="img" aria-label="已送達"><use href="#ticks"/></svg></div>
    </article>

    <article class="bubble received reply">
      <p class="text">我嘅下半身靠你啦<svg class="emoji pray" role="img" aria-label="🙏"><use href="#pray"/></svg></p>
      <div class="meta"><time>下午&#8201;9:40</time></div>
      <svg class="tail" aria-hidden="true"><use href="#tail"/></svg>
    </article>
  </div>
</main>
</body>
</html>
```
FILE: styles.css
```css
* {
  box-sizing: border-box;
}

body {
  margin: 0;
  min-height: 100vh;
  overflow-x: hidden;
  background: #f4f0eb;
  color: #0a0a0a;
  font-family: "Noto Sans CJK TC", "Noto Sans CJK HK", sans-serif;
}

.sprite {
  position: absolute;
  width: 0;
  height: 0;
}

.chat {
  position: relative;
  overflow: hidden;
  background: #f5f2eb;
}

/* wallpaper */
.doodles {
  position: absolute;
  inset: 0;
  width: 100%;
  height: 100%;
  fill: none;
  stroke: #eae0d5;
  stroke-width: 3px;
  stroke-linecap: round;
  stroke-linejoin: round;
}

.doodles path,
.doodles ellipse {
  vector-effect: non-scaling-stroke;
}

.doodles .dot {
  fill: #eae0d5;
}

.doodles .solid {
  fill: #f5f2eb;
}

.numeral {
  font: 700 54px "Roboto", sans-serif;
}

.badge-number {
  font: 400 22px "Roboto", sans-serif;
  stroke-width: 1px;
  fill: #eae0d5;
}

/* messages: the column is wider than the window, so sent bubbles run off its right side */
.thread {
  position: relative;
  display: flex;
  flex-direction: column;
  align-items: flex-start;
  margin-right: -68px;
  padding: 38px 0 22px;
}

.bubble {
  position: relative;
  display: flex;
  align-items: flex-end;
  gap: 41px;
  margin: 0 50px;
  padding: 14px 29px 27px 28px;
  border-radius: 34px;
  box-shadow: 0 1px 2px rgba(60, 40, 20, 0.16);
}

.received {
  background: #fff;
}

.sent {
  align-self: flex-end;
  background: #d8fdd2;
}

.long {
  display: block;
  width: 75%;
  padding-bottom: 26px;
}

.long .text {
  text-align: justify;
}

.reply {
  margin-top: 38px;
}

.reply + .reply {
  margin-top: 40px;
}

.follow {
  margin-top: 13px;
}

.text {
  margin: 0;
  font-size: 50px;
  line-height: 61px;
}

.emoji {
  position: relative;
  top: 2px;
  height: 61px;
  vertical-align: top;
}

.pray {
  width: 62px;
  margin-left: 9px;
}

.salute {
  width: 66px;
  margin-right: 4px;
}

.thumbs {
  width: 58px;
  margin-left: 8px;
}

.meta,
.stamp {
  display: flex;
  align-items: center;
  gap: 10px;
  color: #6b6b6b;
  font-family: "Inter", "Noto Sans CJK TC", sans-serif;
  font-size: 35px;
  font-variant-numeric: tabular-nums;
  line-height: 32px;
  white-space: nowrap;
}

.bubble > .meta {
  margin-bottom: -8px;
}

/* the time sits at the end of the last line of a long message */
.text > .meta {
  float: right;
  margin: 36px 0 -7px;
}

.sent .meta {
  color: #586b57;
}

.ticks {
  width: 46px;
  height: 30px;
}

.tail {
  position: absolute;
  left: -19px;
  bottom: 0;
  width: 50px;
  height: 50px;
}

.sticker {
  display: flex;
  flex-direction: column;
  align-items: flex-start;
  gap: 20px;
  margin: 74px 50px 0;
}

.kiss {
  width: 164px;
  height: 164px;
  margin-left: 13px;
}

.stamp {
  height: 75px;
  padding: 0 30px 0 28px;
  border-radius: 24px;
  background: #fff;
  box-shadow: 0 1px 2px rgba(60, 40, 20, 0.16);
}

.day {
  align-self: center;
  width: 297px;
  margin: 124px 0 0;
  padding-bottom: 3px;
  border-radius: 24px;
  background: rgba(255, 255, 255, 0.94);
  box-shadow: 0 1px 2px rgba(60, 40, 20, 0.16);
  font-size: 38px;
  font-weight: 500;
  line-height: 54px;
  text-align: center;
}

.first {
  margin-top: 43px;
}
```
